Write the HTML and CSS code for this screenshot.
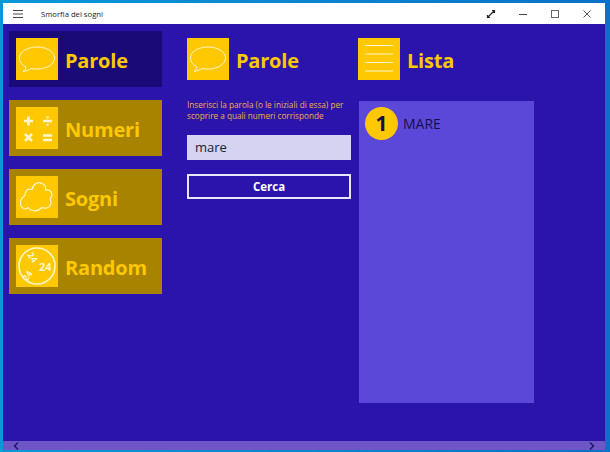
FILE: index.html
```html
<!DOCTYPE html>
<html lang="it">
<head>
<meta charset="utf-8">
<title>Smorfia dei sogni</title>
<link rel="stylesheet" href="styles.css">
</head>
<body>
<div class="window">
  <header class="titlebar">
    <svg class="hamburger" width="10" height="8" viewBox="0 0 10 8"><path d="M0 .5h10M0 4h10M0 7.5h10" stroke="#444" fill="none"/></svg>
    <span class="apptitle">Smorfia dei sogni</span>
    <div class="controls">
      <svg width="10" height="10" viewBox="0 0 10 10"><path d="M2 8L8 2M6 1.500H8.500V4M1.500 6V8.500H4" stroke="#222" stroke-width="1.200" fill="none"/></svg>
      <svg width="10" height="10" viewBox="0 0 10 10"><path d="M1 5.500h8" stroke="#444" fill="none"/></svg>
      <svg width="10" height="10" viewBox="0 0 10 10"><rect x="1.500" y="1.500" width="7" height="7" stroke="#666" fill="none"/></svg>
      <svg width="10" height="10" viewBox="0 0 10 10"><path d="M1.500 1.500l7 7M8.500 1.500l-7 7" stroke="#555" fill="none"/></svg>
    </div>
  </header>
  <main class="content">
    <nav class="menu">
      <div class="tile tile-active">
        <div class="icon"><svg viewBox="0 0 42 42"><use href="#bubble"/></svg></div>
        <span class="label">Parole</span>
      </div>
      <div class="tile">
        <div class="icon"><svg viewBox="0 0 42 42"><path d="M8 14h9M12.500 9.500v9M27 14h9M9 27l7 7M16 27l-7 7M27 28.500h9M27 33h9" stroke="#fff6d0" stroke-width="2.600" fill="none"/><path d="M31.500 9.500v1.800M31.500 16.700v1.800" stroke="#fff6d0" stroke-width="2.600" fill="none"/></svg></div>
        <span class="label">Numeri</span>
      </div>
      <div class="tile">
        <div class="icon"><svg viewBox="0 0 42 42"><path d="M10 33c-4 0-6-3-5.500-7 .3-3 2-5 4.500-6.500C8.500 15 12 12 16 13.500 17 8 22 5 26 7.500c3 1.500 4 4 3.500 6.500 4-.5 6.500 1.500 6.500 5 0 2-1 3-2 4 2 3 1 7-2 8.500-2 1-4 .8-6 0-3 3-6 4-9 3-2.500-.5-4-1.500-5-3-1 .8-2 1.500-2.500 1.500z" stroke="#fff6d0" stroke-width="1.200" fill="none"/></svg></div>
        <span class="label">Sogni</span>
      </div>
      <div class="tile">
        <div class="icon"><svg viewBox="0 0 42 42"><circle cx="21" cy="21" r="18" stroke="#fff6d0" stroke-width="1.600" fill="none"/><text class="ball-small" transform="translate(11 10) rotate(55)">24</text><text class="ball-small" transform="translate(11 37) rotate(-55)">24</text><text class="ball" x="23" y="26">24</text></svg></div>
        <span class="label">Random</span>
      </div>
    </nav>
    <section class="search">
      <div class="head">
        <div class="icon"><svg viewBox="0 0 42 42"><use href="#bubble"/></svg></div>
        <span class="label">Parole</span>
      </div>
      <p class="hint">Inserisci la parola (o le iniziali di essa) per scoprire a quali numeri corrisponde</p>
      <div class="field">mare</div>
      <button class="btn" type="button">Cerca</button>
    </section>
    <section class="results">
      <div class="head">
        <div class="icon"><svg viewBox="0 0 42 42"><path d="M7 7.500h28M7 16h28M7 24.500h28M7 33h28" stroke="#fff6d0" stroke-width="1.200" fill="none"/></svg></div>
        <span class="label">Lista</span>
      </div>
      <div class="list">
        <div class="row">
          <span class="num">1</span>
          <span class="word">MARE</span>
        </div>
      </div>
    </section>
  </main>
  <div class="scrollbar">
    <svg width="6" height="8" viewBox="0 0 6 8"><path d="M5 .5L1.500 4 5 7.500" stroke="#1f1a66" stroke-width="1.500" fill="none"/></svg>
    <svg width="6" height="8" viewBox="0 0 6 8"><path d="M1 .5L4.500 4 1 7.500" stroke="#1f1a66" stroke-width="1.500" fill="none"/></svg>
  </div>
</div>
<svg class="defs" width="0" height="0">
  <symbol id="bubble" viewBox="0 0 42 42">
    <path d="M10 29c-4-2-6.500-5-6.500-9 0-6.500 8-11 17.500-11s17.500 4.500 17.500 11-8 11-17.500 11c-2 0-4 0-6-.5-2 1.500-5 2.500-8 3 1.500-1 2.500-2.500 3-4.500z" stroke="#fff6d0" stroke-width="1" fill="none"/>
  </symbol>
</svg>
</body>
</html>
```
FILE: styles.css
```css
* { box-sizing: border-box; }
html, body { margin: 0; height: 100%; }
body {
  background: linear-gradient(to right, #0c98d8, #0a72c8);
  padding: 3px 5px 2px 3px;
  font-family: "Open Sans", "Noto Sans", sans-serif;
  overflow: hidden;
}
.window {
  height: 447px;
  display: flex;
  flex-direction: column;
  background: #2a14ac;
}
.titlebar {
  height: 21px;
  flex: none;
  background: #fff;
  display: flex;
  align-items: center;
  padding-left: 10px;
}
.hamburger { flex: none; }
.apptitle { margin-left: 18px; font-size: 7.700px; color: #222; }
.controls {
  margin-left: auto;
  display: flex;
  align-items: center;
  gap: 22px;
  padding-right: 13px;
}
.content {
  flex: 1;
  display: flex;
  padding: 7px 0 0 6px;
}
.menu {
  width: 153px;
  display: flex;
  flex-direction: column;
  gap: 13px;
}
.tile {
  height: 56px;
  background: #a78300;
  display: flex;
  align-items: center;
  gap: 7px;
  padding-left: 7px;
}
.tile-active { background: #1a0a78; }
.icon {
  width: 42px;
  height: 42px;
  flex: none;
  background: #ffc800;
}
.icon svg { display: block; width: 42px; height: 42px; }
.ball { font: 700 11px "Open Sans", sans-serif; fill: #fff6d0; }
.ball-small { font: 700 9px "Open Sans", sans-serif; fill: #fff6d0; }
.label {
  font-size: 20px;
  font-weight: 700;
  letter-spacing: -0.2px;
  color: #ffc800;
  line-height: 1;
  padding-top: 4px;
}
.search { width: 164px; margin-left: 25px; padding-top: 7px; }
.head { display: flex; align-items: center; gap: 7px; }
.hint {
  margin: 19px 0 0;
  font-size: 8.200px;
  line-height: 11px;
  color: #f0b040;
}
.field {
  margin-top: 14px;
  height: 25px;
  background: #d6d2f2;
  color: #1c1c30;
  font-size: 13px;
  line-height: 25px;
  padding-left: 8px;
}
.btn {
  display: block;
  width: 164px;
  height: 25px;
  margin-top: 14px;
  background: transparent;
  border: 2px solid #e8e6fa;
  color: #fff;
  font: 700 11.500px "Open Sans", sans-serif;
  padding: 0;
}
.results { margin-left: 7px; padding-top: 7px; }
.list {
  margin: 21px 0 0 1px;
  width: 175px;
  height: 302px;
  background: #5c48d8;
  padding: 6px;
}
.row { display: flex; align-items: center; gap: 5px; }
.num {
  width: 33px;
  height: 33px;
  border-radius: 50%;
  background: #ffc800;
  color: #15104a;
  font-size: 21px;
  font-weight: 700;
  text-align: center;
  line-height: 33px;
}
.word { font-size: 14px; color: #15104a; }
.scrollbar {
  height: 9px;
  flex: none;
  background: #6e56c6;
  display: flex;
  align-items: center;
  justify-content: space-between;
  padding: 0 10px;
}
.defs { position: absolute; }
```
